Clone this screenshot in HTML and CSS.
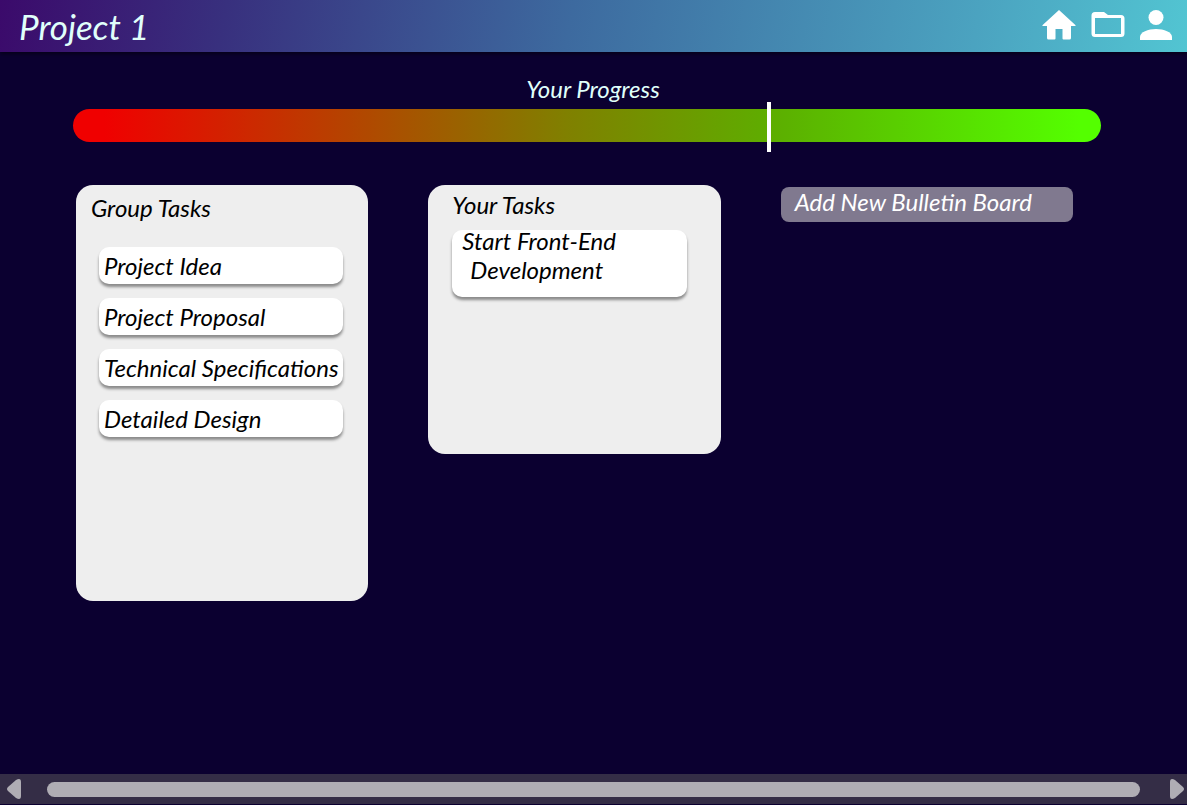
FILE: index.html
```html
<!DOCTYPE html>
<html lang="en">
<head>
<meta charset="utf-8">
<meta name="viewport" content="width=device-width, initial-scale=1">
<title>Project 1</title>
<link rel="stylesheet" href="styles.css">
</head>
<body>
<header class="topbar">
  <h1 class="topbar-title">Project 1</h1>
  <nav class="topbar-nav" aria-label="Main">
    <a class="nav-link" href="#home" aria-label="Home"><svg width="34" height="30" viewBox="0 0 34 30"><path d="M17 0 33.600 15.200Q34 16 33 16H29V28Q29 29.500 27.500 29.500H21.500Q20.500 29.500 20.500 28.500V19H13.500V28.500Q13.500 29.500 12.500 29.500H6.500Q5 29.500 5 28V16H1Q0 16 .4 15.200Z"/></svg></a>
    <a class="nav-link" href="#projects" aria-label="Projects"><svg width="34" height="30" viewBox="0 0 34 30"><path fill-rule="evenodd" d="M4 2H13L17 5H30Q33.500 5 33.500 8.500V23.500Q33.500 27 30 27H4Q.5 27 .5 23.500V5.500Q.5 2 4 2ZM4 8V24H30V8Z"/></svg></a>
    <a class="nav-link" href="#profile" aria-label="Profile"><svg width="32" height="30" viewBox="0 0 32 30"><circle cx="16" cy="7.500" r="7.500"/><path d="M0 30V27C0 22 8 19 16 19S32 22 32 27V30Z"/></svg></a>
  </nav>
</header>
<main class="content">
  <section class="progress">
    <h2 class="progress-title" id="progress-title">Your Progress</h2>
    <div class="progress-bar" role="progressbar" aria-labelledby="progress-title" aria-valuemin="0" aria-valuemax="100" aria-valuenow="68">
      <span class="progress-marker" style="left: 67.5%"></span>
    </div>
  </section>
  <div class="boards">
    <section class="board board-group">
      <h2 class="board-title">Group Tasks</h2>
      <ul class="tasks">
        <li class="task">Project Idea</li>
        <li class="task">Project Proposal</li>
        <li class="task">Technical Specifications</li>
        <li class="task">Detailed Design</li>
      </ul>
    </section>
    <section class="board board-own">
      <h2 class="board-title">Your Tasks</h2>
      <ul class="tasks">
        <li class="task task-tall"><span>Start Front-End</span><span class="task-continued">Development</span></li>
      </ul>
    </section>
    <button class="add-board" type="button">Add New Bulletin Board</button>
  </div>
</main>
<footer class="scroller">
  <button class="scroll-arrow" type="button" aria-label="Scroll left"><svg width="14" height="20" viewBox="0 0 14 20"><path d="M1 8 9 1Q14-1.500 14 3V17Q14 21.500 9 19L1 12Q-1 10 1 8Z"/></svg></button>
  <div class="scroll-thumb"></div>
  <button class="scroll-arrow" type="button" aria-label="Scroll right"><svg width="14" height="20" viewBox="0 0 14 20"><path d="M13 8 5 1Q0-1.500 0 3V17Q0 21.500 5 19L13 12Q15 10 13 8Z"/></svg></button>
</footer>
</body>
</html>
```
FILE: styles.css
```css
* {
  box-sizing: border-box;
}

body {
  display: flex;
  flex-direction: column;
  min-height: 100vh;
  margin: 0;
  background: #0b0030;
  color: #000;
  font-family: Lato, "Open Sans", sans-serif;
  font-size: 24px;
  font-style: italic;
  line-height: 29px;
}

h1,
h2,
ul {
  margin: 0;
  padding: 0;
  font-weight: 400;
}

svg {
  display: block;
  fill: currentColor;
}

button {
  border: 0;
  font: inherit;
  cursor: pointer;
}

.topbar {
  display: flex;
  align-items: center;
  justify-content: space-between;
  height: 52px;
  padding: 0 15px 2px 19px;
  background: linear-gradient(100deg, #3b0a6b 0%, #38307e 19%, #3d6a9f 48%, #4ba3c0 82%, #52c5d2 100%);
  box-shadow: 0 2px 4px rgba(0, 0, 0, 0.5);
  color: #e0fffb;
}

.topbar-title {
  padding-top: 2px;
  font-size: 35px;
  line-height: 40px;
}

.topbar-nav {
  display: flex;
  gap: 15px;
}

.nav-link {
  color: #fff;
}

.content {
  flex: 1;
}

.progress {
  padding: 22px 86px 0 73px;
}

.progress-title {
  padding-left: 12px;
  color: #e0fffb;
  font-size: 24px;
  text-align: center;
}

.progress-bar {
  position: relative;
  height: 33px;
  margin-top: 6px;
  border-radius: 17px;
  background: linear-gradient(90deg, #f00000 3%, #808000 48%, #5cb000 69%, #54ff00 98%);
}

.progress-marker {
  position: absolute;
  top: -7px;
  width: 4px;
  height: 50px;
  background: #fff;
}

.boards {
  display: grid;
  grid-template-columns: repeat(3, minmax(0, 1fr));
  align-items: start;
  gap: 60px;
  padding: 43px 114px 40px 76px;
}

.board {
  border-radius: 17px;
  background: #eee;
}

.board-group {
  min-height: 416px;
  padding: 8px 25px 24px 23px;
}

.board-group .board-title {
  margin: 0 0 25px -8px;
}

.board-own {
  min-height: 269px;
  padding: 5px 34px 24px 24px;
}

.board-own .board-title {
  margin-bottom: 11px;
}

.board-title {
  font-size: 24px;
}

.tasks {
  display: grid;
  gap: 14px;
  list-style: none;
}

.task {
  min-height: 37px;
  padding: 4px 0 4px 5px;
  border-radius: 10px;
  background: #fff;
  box-shadow: 0 3px 3px rgba(0, 0, 0, 0.42);
  white-space: nowrap;
}

.task-tall {
  display: flex;
  flex-direction: column;
  gap: 8px;
  min-height: 67px;
  padding: 0 10px 9px;
  line-height: 21px;
}

.task-continued {
  padding-left: 8px;
}

.add-board {
  min-height: 35px;
  margin-top: 2px;
  padding: 0 14px 6px;
  border-radius: 8px;
  background: #80798f;
  color: #fff;
  text-align: left;
  white-space: nowrap;
}

.scroller {
  display: flex;
  align-items: center;
  height: 30px;
  margin-bottom: 1px;
  padding: 0 3px 0 7px;
  background: #342d46;
}

.scroll-arrow {
  padding: 0;
  background: none;
  color: #afadb4;
}

.scroll-thumb {
  flex: 1;
  height: 15px;
  margin: 0 30px 0 26px;
  border-radius: 8px;
  background: #afadb4;
}
```
